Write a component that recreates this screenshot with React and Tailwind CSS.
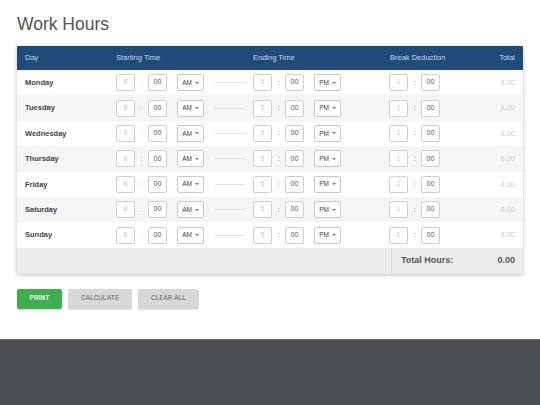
const days = ['Monday', 'Tuesday', 'Wednesday', 'Thursday', 'Friday', 'Saturday', 'Sunday'];

function Box({ value, muted }) {
  return (
    <div
      className={`w-[19px] h-[17px] border border-[#cfcfcf] rounded-[2px] bg-white flex items-center justify-center text-[7px] ${
        muted ? 'text-[#c8c8c8]' : 'text-[#555]'
      }`}
    >
      {value}
    </div>
  );
}

function Colon({ muted }) {
  return (
    <div className={`w-[13px] text-center text-[8px] ${muted ? 'text-[#bbb]' : 'text-[#777]'}`}>:</div>
  );
}

function Meridiem({ label }) {
  return (
    <div className="w-[27px] h-[17px] border border-[#c9c9c9] rounded-[2px] bg-white flex items-center justify-center gap-[3px] text-[6.5px] text-[#444]">
      {label}
      <span className="block w-0 h-0 border-l-[2px] border-r-[2px] border-t-[2px] border-l-transparent border-r-transparent border-t-[#777]" />
    </div>
  );
}

function Row({ day, shaded }) {
  return (
    <div className={`flex items-center h-[25.4px] pl-2 pr-2 ${shaded ? 'bg-[#f5f5f5]' : 'bg-white'}`}>
      <div className="w-[91px] text-[7.5px] font-bold text-[#444]">{day}</div>
      <div className="w-[137px] flex items-center">
        <Box value="8" muted />
        <Colon muted />
        <Box value="00" />
        <div className="w-[10px]" />
        <Meridiem label="AM" />
        <div className="w-[30px] h-px bg-[#e2e2e2] ml-[11px]" />
      </div>
      <div className="w-[136px] flex items-center">
        <Box value="5" muted />
        <Colon />
        <Box value="00" />
        <div className="w-[10px]" />
        <Meridiem label="PM" />
      </div>
      <div className="flex items-center">
        <Box value="1" muted />
        <Colon />
        <Box value="00" />
      </div>
      <div className="flex-1 text-right text-[7.5px] text-[#cfcfcf]">8.00</div>
    </div>
  );
}

export default function App() {
  return (
    <div className="w-[540px] h-[405px] bg-white flex flex-col" style={{ fontFamily: '"Liberation Sans", Arial, sans-serif' }}>
      <div className="h-[339px] px-[17px] pt-[11px]">
        <h1 className="text-[17.5px] text-[#555] leading-none h-[35px] pt-[5px]">Work Hours</h1>
        <div className="w-[506px] shadow-[0_1px_4px_rgba(0,0,0,0.25)] rounded-[1px] overflow-hidden">
          <div className="flex items-center h-[24px] bg-[#1f4a7a] text-[7.5px] text-[#c9d7e8] px-2">
            <div className="w-[91px]">Day</div>
            <div className="w-[137px]">Starting Time</div>
            <div className="w-[137px]">Ending Time</div>
            <div className="flex-1">Break Deduction</div>
            <div>Total</div>
          </div>
          {days.map((d, i) => (
            <Row key={d} day={d} shaded={i % 2 === 1} />
          ))}
          <div className="flex h-[26px] bg-[#ececec]">
            <div className="w-[375px] border-r border-[#dedede]" />
            <div className="flex-1 flex items-center justify-between pl-[9px] pr-2 text-[9px] font-bold text-[#555]">
              <span>Total Hours:</span>
              <span>0.00</span>
            </div>
          </div>
        </div>
        <div className="flex gap-[6px] mt-[15px]" style={{ fontFamily: 'Roboto, "Liberation Sans", sans-serif' }}>
          <button className="w-[45px] h-[20px] bg-[#3cb04a] text-white text-[7px] font-medium rounded-[2px] shadow-[0_1px_1px_rgba(0,0,0,0.15)]">
            PRINT
          </button>
          <button className="w-[64px] h-[20px] bg-[#d7d7d7] text-[#666] text-[7px] font-normal rounded-[2px] shadow-[0_1px_1px_rgba(0,0,0,0.12)]">
            CALCULATE
          </button>
          <button className="w-[61px] h-[20px] bg-[#d7d7d7] text-[#666] text-[7px] font-normal rounded-[2px] shadow-[0_1px_1px_rgba(0,0,0,0.12)]">
            CLEAR ALL
          </button>
        </div>
      </div>
      <div className="flex-1 bg-[#4b4f53] border-t border-[#6e6e6e]" />
    </div>
  );
}
